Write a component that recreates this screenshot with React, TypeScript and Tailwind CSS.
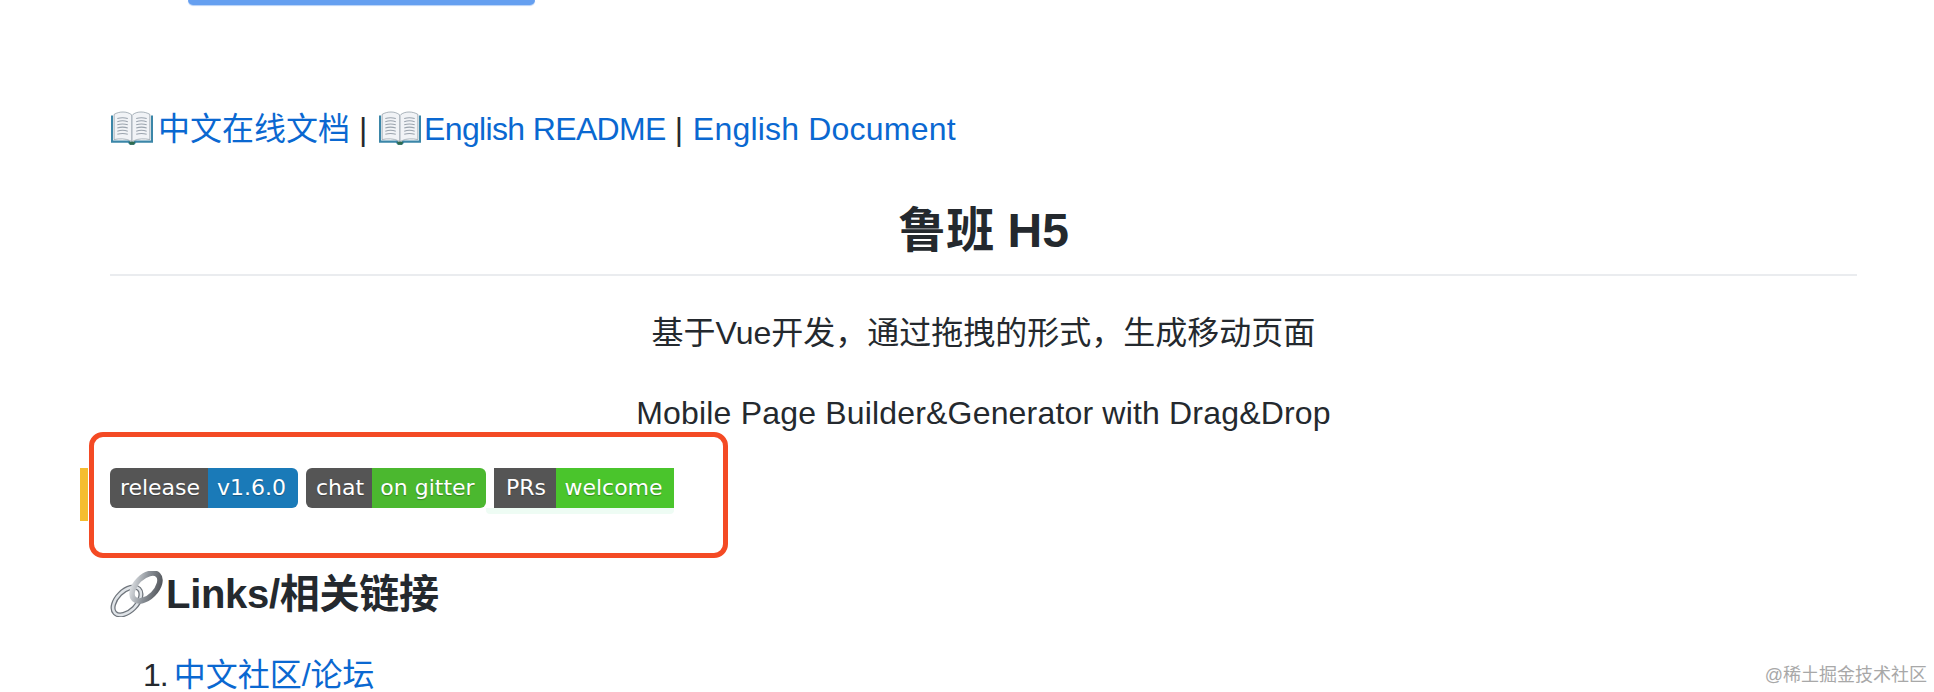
import React from "react";

const cjk = "font-['Liberation_Sans','Noto_Sans_CJK_SC',sans-serif]";

function BookIcon({ className }: { className: string }) {
  return (
    <svg viewBox="0 0 40 32" className={`inline-block w-[42px] h-[34px] align-[-5px] ${className}`}>
      <path d="M0 4h2v24h15l3 2 3-2h15V4h2v26H24l-2 2h-4l-2-2H0z" fill="#3b86a8" />
      <path d="M3 3c5-3 12-3 16 0l1 1v25l-2-1c-4-2-10-2-15-1z" fill="#f1f3f6" stroke="#7c8b96" strokeWidth="0.6" />
      <path d="M37 3c-5-3-12-3-16 0l-1 1v25l2-1c4-2 10-2 15-1z" fill="#f1f3f6" stroke="#7c8b96" strokeWidth="0.6" />
      <g stroke="#9aa3ad" strokeWidth="1">
        <path d="M6 7c3-1 7-1 10 0M6 10c3-1 7-1 10 0M6 13c3-1 7-1 10 0M6 16c3-1 7-1 10 0M6 19c3-1 7-1 10 0M6 22c3-1 7-1 10 0" fill="none" />
        <path d="M24 7c3-1 7-1 10 0M24 10c3-1 7-1 10 0M24 13c3-1 7-1 10 0M24 16c3-1 7-1 10 0M24 19c3-1 7-1 10 0M24 22c3-1 7-1 10 0" fill="none" />
      </g>
      <path d="M17 29h6l-1 3h-4z" fill="#2f6b4f" />
    </svg>
  );
}

function LinkIcon() {
  return (
    <svg viewBox="0 0 54 46" className="inline-block w-[54px] h-[46px] mr-[2px] align-[-9px]">
      <defs>
        <linearGradient id="chain" x1="0" y1="0" x2="1" y2="1">
          <stop offset="0" stopColor="#e4e7ea" />
          <stop offset="0.5" stopColor="#8a9097" />
          <stop offset="1" stopColor="#4a4d52" />
        </linearGradient>
      </defs>
      <ellipse cx="17" cy="30" rx="17" ry="10" transform="rotate(-45 17 30)" fill="none" stroke="#6f757c" strokeWidth="5" />
      <ellipse cx="17" cy="30" rx="17" ry="10" transform="rotate(-45 17 30)" fill="none" stroke="#dfe3e7" strokeWidth="2.5" />
      <ellipse cx="36" cy="16" rx="17" ry="10" transform="rotate(-45 36 16)" fill="none" stroke="url(#chain)" strokeWidth="5.5" />
    </svg>
  );
}

function Badge({
  label,
  value,
  color,
  labelWidth,
  valueWidth,
  square,
}: {
  label: string;
  value: string;
  color: string;
  labelWidth: string;
  valueWidth: string;
  square?: boolean;
}) {
  return (
    <span className="relative h-[40px]">
      {square && <span className="absolute -left-[8px] right-0 -bottom-[6px] h-[6px] rounded-b-[4px] bg-[#eefcf4]" />}
      <span
        className={`relative flex h-[40px] overflow-hidden text-white text-[22px] leading-[40px] text-center font-['DejaVu_Sans',sans-serif] [text-shadow:0_1px_1px_rgba(0,0,0,0.3)] ${
          square ? "" : "rounded-[6px]"
        }`}
      >
        <span className={`${labelWidth} bg-[#555555] pl-[2px]`}>{label}</span>
        <span className={`${valueWidth} ${color} pr-[3px]`}>{value}</span>
      </span>
    </span>
  );
}

export default function App() {
  return (
    <div className={`relative h-[692px] overflow-hidden bg-white pl-[110px] pr-[77px] text-[32px] leading-[48px] text-[#24292e] ${cjk}`}>
      {/* top of the button that is cut off */}
      <div className="-ml-[110px] pl-[188px]">
        <div className="h-[5px] w-[347px] rounded-b-[5px] bg-[#659ff0] shadow-[0_1px_1px_#b5d0f7]" />
      </div>

      <p className="mt-[100px]">
        <BookIcon className="ml-[1px] mr-[5px]" />
        <a className="text-[#0a68d1]">中文在线文档</a> | <BookIcon className="ml-[3px] mr-[3px]" />
        <a className="text-[#0a68d1] tracking-[-0.65px]">English README</a> |{" "}
        <a className="ml-[1px] text-[#0a68d1] tracking-[0.2px]">English Document</a>
      </p>

      <h2 className="mt-[48px] border-b-2 border-[#eaecef] pb-[13px] text-center text-[48px] leading-[60px] font-bold">
        鲁班 H5
      </h2>

      <p className="mt-[33px] text-center">基于Vue开发，通过拖拽的形式，生成移动页面</p>
      <p className="mt-[32px] text-center tracking-[0.18px]">Mobile Page Builder&amp;Generator with Drag&amp;Drop</p>

      <div className="mt-[31px] -ml-[30px] flex h-[53px] gap-[8px] border-l-8 border-[#f5bd2f] pl-[22px]">
        <Badge label="release" value="v1.6.0" color="bg-[#1a7ab8]" labelWidth="w-[98px]" valueWidth="w-[90px]" />
        <Badge label="chat" value="on gitter" color="bg-[#4bb82f]" labelWidth="w-[66px]" valueWidth="w-[114px]" />
        <Badge label="PRs" value="welcome" color="bg-[#4ac52c]" labelWidth="w-[62px]" valueWidth="w-[118px]" square />
      </div>

      <h3 className="mt-[48px] text-[40px] leading-[50px] font-bold tracking-[-0.3px]">
        <LinkIcon />
        Links/相关链接
      </h3>

      <ol className="mt-[32px] pl-[33px]">
        <li className="flex gap-[6px]">
          <span className="tracking-[-1px]">1.</span>
          <a className="text-[#0a68d1]">中文社区/论坛</a>
        </li>
      </ol>

      {/* annotation box */}
      <div className="absolute left-[89px] top-[432px] h-[126px] w-[639px] rounded-[14px] border-[5px] border-[#f44a24]" />

      <span className="absolute right-[7px] top-[663px] text-[18px] leading-[24px] text-[#a8a8a8]">@稀土掘金技术社区</span>
    </div>
  );
}
